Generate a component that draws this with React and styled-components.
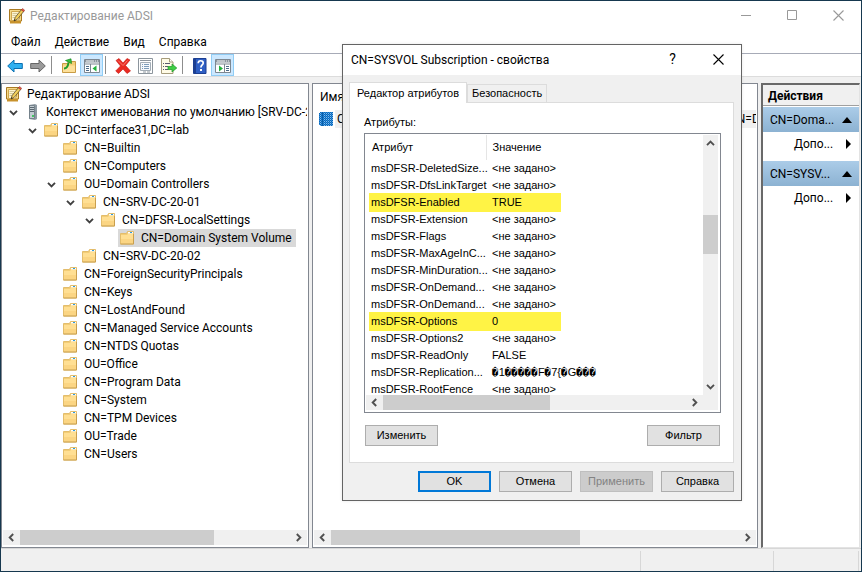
import React from 'react';
import styled, { createGlobalStyle, css } from 'styled-components';

const GlobalStyle = createGlobalStyle`
  * { box-sizing: border-box; }
  body {
    margin: 0;
    background: #fff;
    color: #000;
    font: 12px/18px Roboto, "Open Sans", sans-serif;
  }
  button { font: inherit; color: inherit; }
  ul { list-style: none; margin: 0; padding: 0; }
  svg { display: block; flex: none; }
`;

//data
const tree = [
  { level: 0, label: 'Редактирование ADSI', icon: 'adsi' },
  { level: 1, label: 'Контекст именования по умолчанию [SRV-DC-20-01.interface31.lab]', icon: 'server', open: true },
  { level: 2, label: 'DC=interface31,DC=lab', open: true },
  { level: 3, label: 'CN=Builtin' },
  { level: 3, label: 'CN=Computers' },
  { level: 3, label: 'OU=Domain Controllers', open: true },
  { level: 4, label: 'CN=SRV-DC-20-01', open: true },
  { level: 5, label: 'CN=DFSR-LocalSettings', open: true },
  { level: 6, label: 'CN=Domain System Volume', selected: true },
  { level: 4, label: 'CN=SRV-DC-20-02' },
  { level: 3, label: 'CN=ForeignSecurityPrincipals' },
  { level: 3, label: 'CN=Keys' },
  { level: 3, label: 'CN=LostAndFound' },
  { level: 3, label: 'CN=Managed Service Accounts' },
  { level: 3, label: 'CN=NTDS Quotas' },
  { level: 3, label: 'OU=Office' },
  { level: 3, label: 'CN=Program Data' },
  { level: 3, label: 'CN=System' },
  { level: 3, label: 'CN=TPM Devices' },
  { level: 3, label: 'OU=Trade' },
  { level: 3, label: 'CN=Users' },
];

const attributes = [
  ['msDFSR-DeletedSize...', '<не задано>'],
  ['msDFSR-DfsLinkTarget', '<не задано>'],
  ['msDFSR-Enabled', 'TRUE', true],
  ['msDFSR-Extension', '<не задано>'],
  ['msDFSR-Flags', '<не задано>'],
  ['msDFSR-MaxAgeInC...', '<не задано>'],
  ['msDFSR-MinDuration...', '<не задано>'],
  ['msDFSR-OnDemand...', '<не задано>'],
  ['msDFSR-OnDemand...', '<не задано>'],
  ['msDFSR-Options', '0', true],
  ['msDFSR-Options2', '<не задано>'],
  ['msDFSR-ReadOnly', 'FALSE'],
  ['msDFSR-Replication...', '\uFFFD1\uFFFD\uFFFD\uFFFD\uFFFD\uFFFDF\uFFFD7{\uFFFDG\uFFFD\uFFFD\uFFFD'],
  ['msDFSR-RootFence', '<не задано>'],
];

//icons
const AdsiIcon = () => (
  <svg width="16" height="16" viewBox="0 0 16 16">
    <path d="M0.500 1.500h12v11.500h-12z" fill="#f5d98a" stroke="#a97a22" />
    <path d="M1 13h11v2.500h-11z" fill="#c8922c" />
    <path d="M2.500 3.500h8v7.500l-2 1.500h-6z" fill="#fdf3cf" stroke="#d0a850" />
    <path d="M3.500 5.500h5M3.500 7.500h4M3.500 9.500h3" stroke="#d5c898" />
    <path d="M5 13l1.200-3.600L12.500 1.500l2.300 1.800-6.500 8z" fill="#f2cf5b" stroke="#5c4a2a" strokeWidth="0.800" />
    <path d="M12.200 1.900l1.300-1.400 2.200 1.700-1.100 1.500z" fill="#e2503f" stroke="#8c3a30" strokeWidth="0.500" />
    <path d="M5 13l0.600-1.800 1.200 1z" fill="#222" />
  </svg>
);

const ServerIcon = () => (
  <svg width="16" height="16" viewBox="0 0 16 16">
    <path d="M4 1l6-1 2 1v14l-2 1-6-1z" fill="#8e9aa3" />
    <path d="M4.500 1.500h5v13h-5z" fill="#c3ccd2" stroke="#75828b" />
    <path d="M5 3.500h4M5 5.500h4M5 7.500h4" stroke="#5a6871" />
    <path d="M7 11h2v2h-2z" fill="#43c463" />
  </svg>
);

const FolderIcon = () => (
  <svg width="16" height="16" viewBox="0 0 16 16">
    <path d="M0.500 3.500h6L7.500 1.500h6v12.500h-13z" fill="#f3cd76" stroke="#e3bd6c" />
    <path d="M8 2h5v1.500h-5z" fill="#fff" />
    <path d="M10 2h2v1h-2z" fill="#2d9be0" />
    <path d="M1 5h6l1-1h5v9.500H1z" fill="#ffdf93" />
    <path d="M1 9h12v4.500H1z" fill="#fbd583" />
    <path d="M0.500 14h13V4" fill="none" stroke="#c99f4e" />
  </svg>
);

const ObjectIcon = () => (
  <svg width="16" height="16" viewBox="0 0 16 16" shapeRendering="crispEdges">
    <defs>
      <pattern id="dots" width="2" height="2" patternUnits="userSpaceOnUse">
        <path d="M0 0h2v2H0z" fill="#2f8bd8" />
        <path d="M0 0h1v1H0zM1 1h1v1H1z" fill="#0b67b8" />
        <path d="M1 0h1v1H1z" fill="#7fbdf0" />
      </pattern>
    </defs>
    <path d="M2 1h12v14H2l-2-1V2z" fill="url(#dots)" />
    <path d="M3.500 1v14" stroke="#0a5ea8" />
  </svg>
);

const ArrowIcon = ({ fill, stroke, flip }) => (
  <svg width="16" height="14" viewBox="0 0 16 14">
    <path
      d="M0.700 7L7 1v3.500h8.300v5H7V13z"
      fill={fill}
      stroke={stroke}
      strokeLinejoin="round"
      transform={flip ? 'rotate(180 8 7)' : undefined}
    />
  </svg>
);

const UpFolderIcon = () => (
  <svg width="16" height="16" viewBox="0 0 16 16">
    <path d="M1.500 5.500h5l1-2h7v11h-13z" fill="#f4cf78" stroke="#c99c45" />
    <path d="M2 7.500h12v6.500H2z" fill="#fde09a" />
    <path d="M3 10.500c3 0 4-2 4.500-6" fill="none" stroke="#1f9d2b" strokeWidth="2" />
    <path d="M4.500 2.500L10 0.800 10.500 5.500z" fill="#34c23e" stroke="#178a22" strokeWidth="0.700" />
  </svg>
);

// console window with a pane on the left or the right side
const PaneIcon = ({ right }) => (
  <svg width="16" height="16" viewBox="0 0 16 16">
    <path d="M0.500 1.500h15v13h-15z" fill="#fff" stroke="#7d8791" />
    <path d="M1 2h14v2.500H1z" fill="#8b959e" />
    <path d="M2 3h8M11 3h1M13 3h1" stroke="#fff" strokeWidth="0.900" />
    <path d="M1 6h14" stroke="#7d8791" />
    <path d={right ? 'M9.500 6v8.500' : 'M6.500 6v8.500'} stroke="#7d8791" />
    <path d={right ? 'M11 8.500h3M11 10.500h3M11 12.500h3' : 'M2 8.500h3M2 10.500h3M2 12.500h3'} stroke="#4b6a88" />
    <path d={right ? 'M4 7.500l4 3-4 3z' : 'M12.500 7.500l-4 3 4 3z'} fill="#21b13a" />
  </svg>
);

const DeleteIcon = () => (
  <svg width="16" height="16" viewBox="0 0 16 16">
    <path
      d="M1 2.500L4 0.500 8 5l4-4.500 3 1.500-4.500 5.500L15.500 13 12 15.500 8 11l-4.500 4.500L0.700 13 5.500 8z"
      fill="#ea2a22"
      stroke="#c3140f"
      strokeWidth="0.600"
    />
    <path d="M3 2.500l5 5 4.500-5" fill="none" stroke="#f87a70" />
  </svg>
);

const PropertiesIcon = () => (
  <svg width="16" height="16" viewBox="0 0 16 16">
    <path d="M0.500 0.500h14v15H0.500z" fill="#fff" stroke="#8c959d" />
    <path d="M2 2.500h11" stroke="#8c959d" />
    <path d="M2.500 4.500h10v8h-10z" fill="#f5f8fb" stroke="#a3adb6" />
    <path d="M4 6.500h1M6 6.500h5M4 8.500h1M6 8.500h5M4 10.500h1M6 10.500h5" stroke="#7c9cba" />
    <path d="M5 14h3M9 14h3" stroke="#8c959d" />
  </svg>
);

const ExportIcon = () => (
  <svg width="16" height="16" viewBox="0 0 16 16">
    <path d="M0.500 0.500h8l3.500 3.500v11.500H0.500z" fill="#fffbe6" stroke="#a69c7c" />
    <path d="M8.500 0.500v3.500H12" fill="#fff" stroke="#a69c7c" />
    <path d="M2 5.500h1M4 5.500h5M2 8.500h1M4 8.500h3M2 11.500h1M4 11.500h3" stroke="#5b5b6e" />
    <path d="M7 8.500h4V6l4.800 4-4.800 4v-2.500H7z" fill="#3fce45" stroke="#1c9626" strokeWidth="0.700" />
  </svg>
);

const HelpIcon = () => (
  <svg width="14" height="16" viewBox="0 0 14 16">
    <path d="M0.500 0.500h12.500v15H0.500z" fill="#2f5fc4" stroke="#1c3f92" />
    <path d="M1 1h2v14H1z" fill="#1d3f91" />
    <path d="M5.200 5.200c0-3.200 5-3.200 5-0.300 0 2-2.300 2-2.300 4.600" fill="none" stroke="#fff" strokeWidth="1.700" />
    <path d="M7 11h2v2H7z" fill="#fff" />
  </svg>
);

const MinimizeIcon = () => (
  <svg width="11" height="11" viewBox="0 0 11 11">
    <path d="M0 5.500h10" stroke="#999" />
  </svg>
);

const MaximizeIcon = () => (
  <svg width="11" height="11" viewBox="0 0 11 11">
    <path d="M0.500 0.500h9v9h-9z" fill="none" stroke="#999" />
  </svg>
);

const CloseIcon = ({ color = '#000' }) => (
  <svg width="11" height="11" viewBox="0 0 11 11">
    <path d="M0.500 0.500l10 10M10.500 0.500l-10 10" stroke={color} strokeWidth="1.100" />
  </svg>
);

const turns = { down: 0, left: 90, up: 180, right: 270 };

const Chevron = ({ to, color = '#505050' }) => (
  <svg width="9" height="9" viewBox="0 0 9 9">
    <path
      d="M1 2.800l3.500 3.500L8 2.800"
      fill="none"
      stroke={color}
      strokeWidth="1.900"
      transform={`rotate(${turns[to]} 4.500 4.500)`}
    />
  </svg>
);

const Triangle = ({ to }) => (
  <svg width="10" height="10" viewBox="0 0 10 10">
    <path d={to === 'up' ? 'M0 8h10L5 2z' : 'M3 0v10l5-5z'} fill="#000" />
  </svg>
);

const treeIcons = { adsi: AdsiIcon, server: ServerIcon, folder: FolderIcon };

//main window
const Frame = styled.div`
  position: relative;
  display: flex;
  flex-direction: column;
  min-height: 100vh;
  background: #f0f0f0;
  border: 1px solid #16384f;
  overflow: hidden;
`;

const TitleBar = styled.header`
  display: flex;
  align-items: center;
  height: 30px;
  background: #fff;
  color: ${(p) => (p.$active ? '#000' : '#999')};
  padding-left: 8px;
  gap: 5px;

  h1, h2 {
    flex: 1;
    margin: 0;
    font-size: 12px;
    font-weight: 400;
  }
`;

const CaptionButtons = styled.div`
  display: flex;
`;

const CaptionButton = styled.button`
  display: flex;
  align-items: center;
  justify-content: center;
  width: 46px;
  height: 28px;
  padding: 0 0 2px 1px;
  border: 0;
  background: none;
  font-size: 14px;
`;

const MenuBar = styled.nav`
  display: flex;
  gap: 14px;
  height: 23px;
  padding: 0 10px;
  background: #fff;
  border-bottom: 1px solid #a7abb7;
`;

const MenuItem = styled.button`
  padding: 0;
  border: 0;
  background: none;
`;

const ToolBar = styled.div`
  display: flex;
  align-items: center;
  height: 23px;
  padding-left: 2px;
  background: #fff;
  border-bottom: 1px solid #dcdcdc;
`;

const ToolButton = styled.button`
  display: flex;
  align-items: center;
  justify-content: center;
  width: 23px;
  height: 22px;
  padding: 2px 0 0;
  border: 1px solid ${(p) => (p.$pressed ? '#90cdf5' : 'transparent')};
  background: ${(p) => (p.$pressed ? '#cce8ff' : 'none')};
`;

const ToolSeparator = styled.span`
  width: 1px;
  height: 18px;
  margin: 0 5px 0 2px;
  background: #8d8d8d;
`;

const Panes = styled.main`
  flex: 1;
  display: grid;
  grid-template-columns: 308px minmax(0, 1fr) 99px;
  gap: 3px;
  padding: 6px 1px 0 0;
`;

const Pane = styled.section`
  display: flex;
  flex-direction: column;
  min-width: 0;
  padding: 1px 1px 2px;
  background: #fff;
  border: 1px solid #828790;
`;

const Tree = styled.ul`
  flex: 1;
  overflow: hidden;
`;

const TreeItem = styled.li`
  display: flex;
  height: 18px;
  padding-left: ${(p) => p.$level * 19 + 1}px;
  white-space: nowrap;
`;

const TreeToggle = styled.span`
  display: flex;
  align-items: center;
  justify-content: center;
  flex: none;
  width: 18px;
  margin-left: -18px;
  padding-right: 1px;
`;

const TreeLabel = styled.span`
  display: flex;
  align-items: center;
  gap: 5px;
  padding: 0 4px 0 2px;
  background: ${(p) => (p.$selected ? '#d9d9d9' : 'none')};
`;

const ListTable = styled.div`
  flex: 1;
  overflow: hidden;
  white-space: nowrap;
`;

const ListHeader = styled.div`
  padding: 3px 6px;
  height: 24px;
`;

const ListRow = styled.div`
  display: grid;
  grid-template-columns: 16px 392px auto;
  align-items: center;
  padding-left: 5px;
  height: 19px;

  span {
    background: #f0f0f0;
    padding: 0 2px;
  }
`;

const ActionsPane = styled.aside`
  background: #fff;
  border: solid;
  border-width: 2px 1px 1px 2px;
  border-color: #696969 #e3e3e3 #e3e3e3 #696969;
`;

const ActionsTitle = styled.h2`
  margin: 0 0 1px;
  padding: 2px 5px 0;
  height: 21px;
  background: #f0f0f0;
  border-bottom: 1px solid #a0a0a0;
  font-size: 12px;
  font-weight: 700;
`;

const actionRow = css`
  display: flex;
  align-items: center;
  justify-content: space-between;
  width: 100%;
  height: 25px;
  border: 0;
  text-align: left;
`;

const ActionGroup = styled.button`
  ${actionRow}
  padding: 0 7px;
  background: linear-gradient(#abcce8, #8cb2d2);
`;

const ActionItem = styled.button`
  ${actionRow}
  height: 24px;
  margin-bottom: 5px;
  padding: 0 6px 0 31px;
  background: none;
`;

const StatusBar = styled.footer`
  display: grid;
  grid-template-columns: 1fr 133px 85px 3px;
  height: 23px;
  padding-top: 2px;
  border-top: 1px solid #d7d7d7;

  span + span { border-left: 1px solid #d7d7d7; }
`;

//scrollbars
const Scroll = styled.div`
  display: flex;
  flex: none;
  flex-direction: ${(p) => (p.$vertical ? 'column' : 'row')};
  ${(p) => (p.$vertical ? 'width: 15px;' : 'height: 15px;')}
  background: #f0f0f0;
`;

const ScrollButton = styled.button`
  display: flex;
  align-items: center;
  justify-content: center;
  flex: none;
  width: ${(p) => (p.$vertical ? 15 : 17)}px;
  height: ${(p) => (p.$vertical ? 17 : 15)}px;
  padding: 0;
  border: 0;
  background: none;
`;

const ScrollTrack = styled.div`
  flex: 1;
  display: flex;
  flex-direction: ${(p) => (p.$vertical ? 'column' : 'row')};
`;

const ScrollSpace = styled.div`
  flex: ${(p) => p.$grow} 0 0;
  background: ${(p) => (p.$thumb ? '#cdcdcd' : 'none')};
`;

function ScrollBar({ vertical, start = 0, size }) {
  return (
    <Scroll $vertical={vertical}>
      <ScrollButton $vertical={vertical} aria-label="Назад">
        <Chevron to={vertical ? 'up' : 'left'} />
      </ScrollButton>
      <ScrollTrack $vertical={vertical}>
        <ScrollSpace $grow={start} />
        <ScrollSpace $grow={size} $thumb />
        <ScrollSpace $grow={100 - start - size} />
      </ScrollTrack>
      <ScrollButton $vertical={vertical} aria-label="Вперёд">
        <Chevron to={vertical ? 'down' : 'right'} />
      </ScrollButton>
    </Scroll>
  );
}

//dialog
const Dialog = styled.section`
  position: absolute;
  top: 43px;
  left: 341px;
  width: 400px;
  background: #f0f0f0;
  border: 1px solid #646464;
  box-shadow: 0 0 3px rgba(0, 0, 0, 0.1);
`;

const DialogBody = styled.div`
  padding: 7px 7px 8px 6px;
  font: 11px/17px "Liberation Sans", Arial, sans-serif;
`;

const Tabs = styled.div`
  display: flex;
  align-items: flex-end;
`;

const Tab = styled.button`
  position: relative;
  height: ${(p) => (p.$active ? 21 : 18)}px;
  padding: 0 ${(p) => (p.$active ? 7 : 4)}px;
  margin-bottom: ${(p) => (p.$active ? -1 : 0)}px;
  background: ${(p) => (p.$active ? '#fff' : '#f0f0f0')};
  border: 1px solid #dcdcdc;
  border-bottom: 0;
  white-space: nowrap;
`;

const TabPanel = styled.div`
  padding: 11px 12px 16px 14px;
  background: #fff;
  border: 1px solid #dcdcdc;
`;

const ListLabel = styled.div`
  margin-bottom: 2px;
`;

const AttributeBox = styled.div`
  display: grid;
  grid-template-columns: minmax(0, 1fr) 17px;
  height: 280px;
  padding: 1px 0 2px 1px;
  border: 1px solid #828790;
`;

const AttributeView = styled.div`
  display: flex;
  flex-direction: column;
  min-height: 0;
`;

const AttributeScroll = styled.div`
  flex: 1;
  min-height: 0;
  overflow: hidden;
  padding-left: 3px;
`;

const AttributeTable = styled.table`
  width: 192px;
  table-layout: fixed;
  border-collapse: collapse;

  th {
    height: 25px;
    padding: 0 3px;
    font-weight: 400;
    text-align: left;
  }
  th:first-child {
    width: 117px;
    border-right: 1px solid #e5e5e5;
  }
  th + th, td + td { padding-left: 6px; }

  td {
    height: 17px;
    padding: 0 0 0 2px;
    white-space: nowrap;
  }
`;

const AttributeRow = styled.tr`
  ${(p) => p.$marked && css`
    background: #fff345;
    box-shadow: 0 1px #fff345, 0 -1px #fff345;
  `}
`;

// bytes that have no printable character
const RawByte = styled.span`
  font-family: "DejaVu Sans Mono", monospace;
  line-height: 1;
`;

const ScrollSide = styled.div`
  display: flex;
  flex-direction: column;
  padding-bottom: 15px;
  background: linear-gradient(#f0f0f0, #f0f0f0) 0 0 / 15px 100% no-repeat;

  > div { flex: 1; }
`;

const ButtonRow = styled.div`
  display: flex;
  justify-content: ${(p) => (p.$spread ? 'space-between' : 'flex-end')};
  gap: 8px;
  padding: ${(p) => (p.$spread ? '12px 1px 0' : '8px 0 0')};
`;

const Button = styled.button`
  width: 73px;
  height: 21px;
  padding: 0;
  background: #e1e1e1;
  border: 1px solid #adadad;
  ${(p) => p.$primary && 'border: 2px solid #0078d7;'}

  &:disabled {
    color: #838383;
    background: #ccc;
    border-color: #bfbfbf;
  }
`;

const AttributeValue = ({ value }) =>
  value.split(/(\uFFFD+)/).map((part, i) =>
    part.startsWith('\uFFFD') ? <RawByte key={i}>{part}</RawByte> : part
  );

function PropertiesDialog() {
  return (
    <Dialog role="dialog" aria-labelledby="dialog-title">
      <TitleBar $active>
        <h2 id="dialog-title">CN=SYSVOL Subscription - свойства</h2>
        <CaptionButtons>
          <CaptionButton>?</CaptionButton>
          <CaptionButton aria-label="Закрыть"><CloseIcon /></CaptionButton>
        </CaptionButtons>
      </TitleBar>
      <DialogBody>
        <Tabs role="tablist">
          <Tab role="tab" aria-selected="true" $active>Редактор атрибутов</Tab>
          <Tab role="tab" aria-selected="false">Безопасность</Tab>
        </Tabs>
        <TabPanel role="tabpanel">
          <ListLabel id="attributes-label">Атрибуты:</ListLabel>
          <AttributeBox>
            <AttributeView>
              <AttributeScroll>
                <AttributeTable aria-labelledby="attributes-label">
                  <thead>
                    <tr><th>Атрибут</th><th>Значение</th></tr>
                  </thead>
                  <tbody>
                    {attributes.map(([name, value, marked], i) => (
                      <AttributeRow key={i} $marked={marked}>
                        <td>{name}</td>
                        <td><AttributeValue value={value} /></td>
                      </AttributeRow>
                    ))}
                  </tbody>
                </AttributeTable>
              </AttributeScroll>
              <ScrollBar size={55} />
            </AttributeView>
            <ScrollSide>
              <ScrollBar vertical start={28} size={17} />
            </ScrollSide>
          </AttributeBox>
          <ButtonRow $spread>
            <Button>Изменить</Button>
            <Button>Фильтр</Button>
          </ButtonRow>
        </TabPanel>
        <ButtonRow>
          <Button $primary>OK</Button>
          <Button>Отмена</Button>
          <Button disabled>Применить</Button>
          <Button>Справка</Button>
        </ButtonRow>
      </DialogBody>
    </Dialog>
  );
}

function App() {
  return (
    <>
      <GlobalStyle />
      <Frame>
        <TitleBar>
          <AdsiIcon />
          <h1>Редактирование ADSI</h1>
          <CaptionButtons>
            <CaptionButton aria-label="Свернуть"><MinimizeIcon /></CaptionButton>
            <CaptionButton aria-label="Развернуть"><MaximizeIcon /></CaptionButton>
            <CaptionButton aria-label="Закрыть"><CloseIcon color="#999" /></CaptionButton>
          </CaptionButtons>
        </TitleBar>

        <MenuBar>
          {['Файл', 'Действие', 'Вид', 'Справка'].map((name) => (
            <MenuItem key={name}>{name}</MenuItem>
          ))}
        </MenuBar>

        <ToolBar>
          <ToolButton aria-label="Назад"><ArrowIcon fill="#2fb0f0" stroke="#0b6fb0" /></ToolButton>
          <ToolButton aria-label="Вперёд"><ArrowIcon fill="#9a9a9a" stroke="#666" flip /></ToolButton>
          <ToolSeparator />
          <ToolButton aria-label="Вверх"><UpFolderIcon /></ToolButton>
          <ToolButton aria-label="Дерево консоли" $pressed><PaneIcon /></ToolButton>
          <ToolSeparator />
          <ToolButton aria-label="Удалить"><DeleteIcon /></ToolButton>
          <ToolButton aria-label="Свойства"><PropertiesIcon /></ToolButton>
          <ToolButton aria-label="Экспорт"><ExportIcon /></ToolButton>
          <ToolSeparator />
          <ToolButton aria-label="Справка"><HelpIcon /></ToolButton>
          <ToolButton aria-label="Панель действий" $pressed><PaneIcon right /></ToolButton>
        </ToolBar>

        <Panes>
          {/* console tree */}
          <Pane>
            <Tree>
              {tree.map((node) => {
                const Icon = treeIcons[node.icon || 'folder'];
                return (
                  <TreeItem key={node.label} $level={node.level}>
                    {node.open && (
                      <TreeToggle><Chevron to="down" color="#404040" /></TreeToggle>
                    )}
                    <TreeLabel $selected={node.selected}>
                      <Icon />
                      {node.label}
                    </TreeLabel>
                  </TreeItem>
                );
              })}
            </Tree>
            <ScrollBar size={72} />
          </Pane>

          {/* objects */}
          <Pane>
            <ListTable>
              <ListHeader>Имя</ListHeader>
              <ListRow>
                <ObjectIcon />
                <span>CN=SYSVOL Subscription</span>
                <span>CN=Domain System Volume</span>
              </ListRow>
            </ListTable>
            <ScrollBar size={61} />
          </Pane>

          {/* actions */}
          <ActionsPane>
            <ActionsTitle>Действия</ActionsTitle>
            {['CN=Doma...', 'CN=SYSV...'].map((name) => (
              <React.Fragment key={name}>
                <ActionGroup>{name}<Triangle to="up" /></ActionGroup>
                <ActionItem>Допо...<Triangle to="right" /></ActionItem>
              </React.Fragment>
            ))}
          </ActionsPane>
        </Panes>

        <StatusBar><span /><span /><span /><span /></StatusBar>

        <PropertiesDialog />
      </Frame>
    </>
  );
}

export default App;
